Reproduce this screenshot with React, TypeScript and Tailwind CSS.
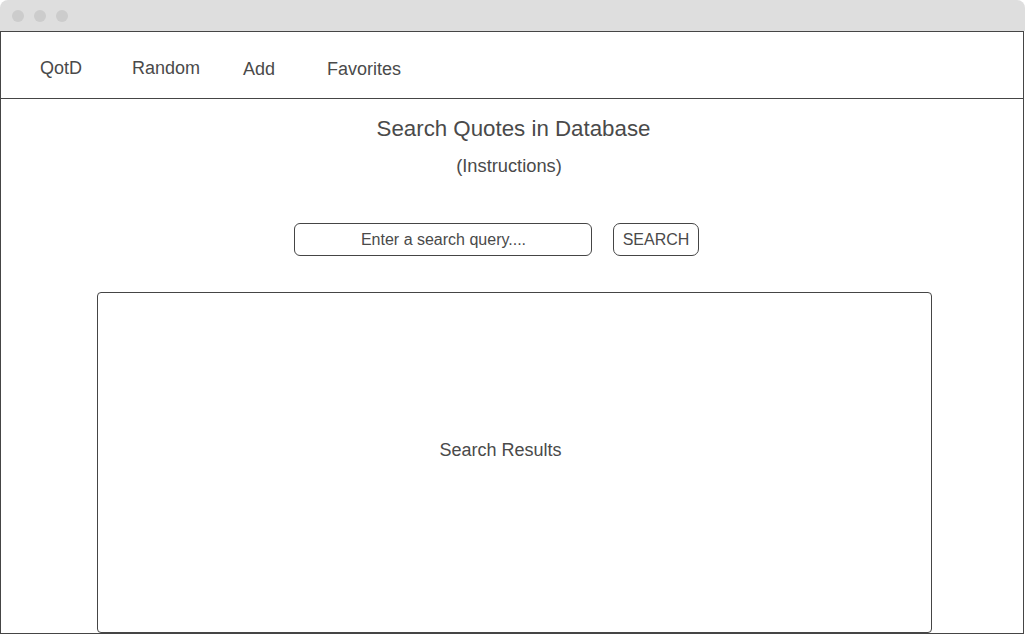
import React from "react";

export default function App() {
  const font = { fontFamily: '"Liberation Sans", Arial, sans-serif' };
  return (
    <div className="w-[1025px] h-[635px] bg-white text-[#4a4a4a] overflow-hidden" style={font}>
      <div className="h-[31px] bg-[#dedede] rounded-t-[8px] flex items-center pl-[12px] gap-[10px]">
        <div className="w-[12px] h-[12px] rounded-full bg-[#cccccc]" />
        <div className="w-[12px] h-[12px] rounded-full bg-[#cccccc]" />
        <div className="w-[12px] h-[12px] rounded-full bg-[#cccccc]" />
      </div>
      <div className="w-[1024px] h-[603px] border border-[#454545] flex flex-col">
        <nav className="h-[67px] border-b border-[#454545] flex items-center pl-[39px] pt-[6px] text-[18px] shrink-0">
          <span>QotD</span>
          <span className="ml-[50px]">Random</span>
          <span className="ml-[43px] mt-[2px]">Add</span>
          <span className="ml-[52px] mt-[2px]">Favorites</span>
        </nav>
        <div className="flex-1 flex flex-col">
          <h1 className="text-[22.3px] leading-[26px] text-center mt-[17px] pl-[3px]">Search Quotes in Database</h1>
          <p className="text-[18.3px] leading-[22px] text-center mt-[13px] pr-[6px]">(Instructions)</p>
          <div className="flex items-center mt-[46px] pl-[293px]">
            <div className="w-[298px] h-[33px] border border-[#454545] rounded-[6px] flex items-center justify-center text-[16px] pl-[1px] pt-[1px]">
              Enter a search query....
            </div>
            <div className="ml-[21px] w-[86px] h-[33px] border border-[#454545] rounded-[7px] flex items-center justify-center text-[16px] pt-[1px]">
              SEARCH
            </div>
          </div>
          <div className="ml-[96px] mt-[36px] w-[835px] h-[341px] border border-[#454545] rounded-[4px] flex items-center justify-center pr-[28px] pb-[24px] text-[18px]">
            Search Results
          </div>
        </div>
      </div>
    </div>
  );
}
